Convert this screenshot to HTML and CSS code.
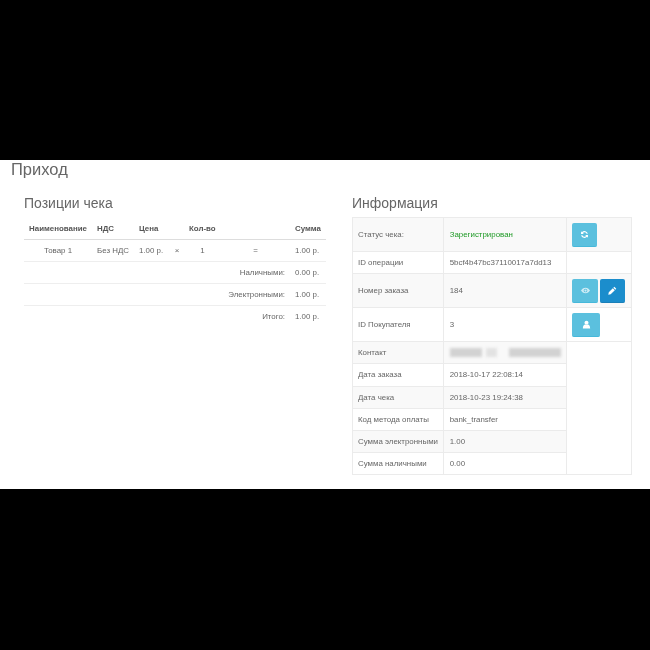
FILE: index.html
```html
<!DOCTYPE html>
<html lang="ru">
<head>
<meta charset="utf-8">
<title>Приход</title>
<link rel="stylesheet" href="styles.css">
</head>
<body>
<main class="sheet">
  <h1 class="title">Приход</h1>
  <div class="columns">
    <section class="left">
      <h2 class="subtitle">Позиции чека</h2>
      <table class="items">
        <colgroup>
          <col class="c1"><col class="c2"><col class="c3"><col class="c4"><col class="c5"><col class="c6"><col class="c7">
        </colgroup>
        <thead>
          <tr><th class="center">Наименование</th><th>НДС</th><th>Цена</th><th></th><th>Кол-во</th><th></th><th>Сумма</th></tr>
        </thead>
        <tbody>
          <tr><td class="center">Товар 1</td><td>Без НДС</td><td>1.00 р.</td><td class="center">×</td><td class="center">1</td><td class="center">=</td><td>1.00 р.</td></tr>
          <tr><td colspan="6" class="right">Наличными:</td><td>0.00 р.</td></tr>
          <tr><td colspan="6" class="right">Электронными:</td><td>1.00 р.</td></tr>
          <tr><td colspan="6" class="right">Итого:</td><td>1.00 р.</td></tr>
        </tbody>
      </table>
    </section>
    <section class="info">
      <h2 class="subtitle">Информация</h2>
      <table class="details">
        <colgroup><col class="d1"><col class="d2"><col class="d3"></colgroup>
        <tbody>
          <tr class="tall odd">
            <td>Статус чека:</td><td class="ok">Зарегистрирован</td>
            <td class="actions"><span class="btn b-refresh"><svg viewBox="0 0 16 16" class="ico"><path d="M14 6.800A6.200 6.200 0 0 0 3.400 3.900L1.800 2.300v5h5L5 5.500a3.900 3.900 0 0 1 6.700 1.300zM2 9.200a6.200 6.200 0 0 0 10.600 2.900l1.600 1.600v-5h-5l1.800 1.800a3.900 3.900 0 0 1-6.700-1.300z"/></svg></span></td>
          </tr>
          <tr class="short"><td>ID операции</td><td>5bcf4b47bc37110017a7dd13</td><td></td></tr>
          <tr class="tall odd">
            <td>Номер заказа</td><td>184</td>
            <td class="actions"><span class="btn b-eye"><svg viewBox="0 0 16 16" class="ico dim"><path fill-rule="evenodd" d="M8 3C4.400 3 1.700 5.400 0 8c1.700 2.600 4.400 5 8 5s6.300-2.400 8-5c-1.700-2.600-4.400-5-8-5zM8 11.300a3.300 3.300 0 1 1 0-6.600 3.300 3.300 0 0 1 0 6.600z"/><circle cx="8" cy="8" r="2"/></svg></span><span class="btn b-edit"><svg viewBox="0 0 16 16" class="ico"><path d="M11.200 1.300l3.500 3.500-1.700 1.700-3.500-3.500zM8.600 3.900l3.500 3.500-7.300 7.300-4.300.900.900-4.300z"/></svg></span></td>
          </tr>
          <tr class="tall">
            <td>ID Покупателя</td><td>3</td>
            <td class="actions"><span class="btn b-user"><svg viewBox="0 0 16 16" class="ico"><circle cx="8" cy="4.800" r="3.600"/><path d="M1.500 15c0-4.200 2-6.500 4.300-6.800.6.500 1.400.8 2.200.8s1.600-.3 2.200-.8c2.300.3 4.300 2.600 4.300 6.800z"/></svg></span></td>
          </tr>
          <tr class="short odd"><td>Контакт</td><td><div class="blurred"><span class="b1"></span><span class="b2"></span><span class="b3"></span></div></td><td rowspan="6" class="empty"></td></tr>
          <tr class="short"><td>Дата заказа</td><td>2018-10-17 22:08:14</td></tr>
          <tr class="short odd"><td>Дата чека</td><td>2018-10-23 19:24:38</td></tr>
          <tr class="short"><td>Код метода оплаты</td><td>bank_transfer</td></tr>
          <tr class="short odd"><td>Сумма электронными</td><td>1.00</td></tr>
          <tr class="short"><td>Сумма наличными</td><td>0.00</td></tr>
        </tbody>
      </table>
    </section>
  </div>
</main>
</body>
</html>
```
FILE: styles.css
```css
html, body {
  margin: 0;
  height: 650px;
  background: #000;
  overflow: hidden;
}
body {
  font-family: "Liberation Sans", Arial, sans-serif;
  color: #666;
  font-size: 7.9px;
}
.sheet {
  margin-top: 160px;
  height: 329px;
  box-sizing: border-box;
  background: #fff;
  overflow: hidden;
  filter: blur(.35px);
}
.title {
  margin: 0;
  padding: 0 0 0 11px;
  font-size: 16.5px;
  font-weight: 400;
  line-height: 18px;
}
.columns {
  display: flex;
  margin-top: 17px;
  padding-left: 24px;
}
.left { width: 302px; margin-right: 26px; }
.info { width: 279px; }
.subtitle {
  margin: 0 0 5px;
  font-size: 14px;
  font-weight: 400;
  line-height: 17px;
}
table {
  border-collapse: collapse;
  table-layout: fixed;
}
.items { width: 302px; margin-top: 6.700px; }
.c1 { width: 68px; }
.c2 { width: 42px; }
.c3 { width: 36px; }
.c4 { width: 14px; }
.c5 { width: 37px; }
.c6 { width: 69px; }
.c7 { width: 36px; }
.items th, .items td {
  padding: 0 0 0 5px;
  text-align: left;
  white-space: nowrap;
}
.items th {
  font-weight: 700;
  color: #555;
  height: 20px;
  border-bottom: 1px solid #ddd;
}
.items td { border-bottom: 1px solid #eee; height: 21px; }
.items tr:last-child td { border-bottom: 0; }
.items .center { text-align: center; padding: 0; }
.items .right { text-align: right; padding: 0 5px 0 0; }
.details {
  width: 278.500px;
  margin-top: 0;
}
.d1 { width: 91px; }
.d2 { width: 122.500px; }
.d3 { width: 65px; }
.details td {
  border: 1px solid #ebebeb;
  padding: 0 5px;
  white-space: nowrap;
}
.details td:nth-child(2) { padding-left: 5.700px; }
.odd td:not(.empty) { background: #f9f9f9; }
.tall td { height: 33px; }
.short td { height: 21.200px; }
.ok { color: #1f9a26; }
.actions .btn + .btn { margin-left: 2px; }
.details td.actions { padding: 0 0 0 5.500px; }
.btn {
  display: inline-flex;
  align-items: center;
  justify-content: center;
  vertical-align: middle;
  height: 24px;
  border-radius: 2px;
  background: #5bc0de;
  border-bottom: 1px solid #46b8da;
  box-sizing: border-box;
}
.b-refresh { width: 25px; }
.b-eye { width: 26px; }
.b-edit { width: 25px; background: #1b8dcc; border-bottom-color: #1a7fb8; }
.b-user { width: 28px; }
.ico { width: 9px; height: 9px; fill: #fff; }
.dim { opacity: .7; }
.blurred {
  display: flex;
  filter: blur(1.500px);
  height: 9px;
}
.blurred span { background: #d2d2d2; display: block; height: 9px; }
.b1 { width: 33px; margin-right: 4px; }
.b2 { width: 11px; margin-right: 12px; background: #e2e2e2 !important; }
.b3 { width: 52px; }
```
